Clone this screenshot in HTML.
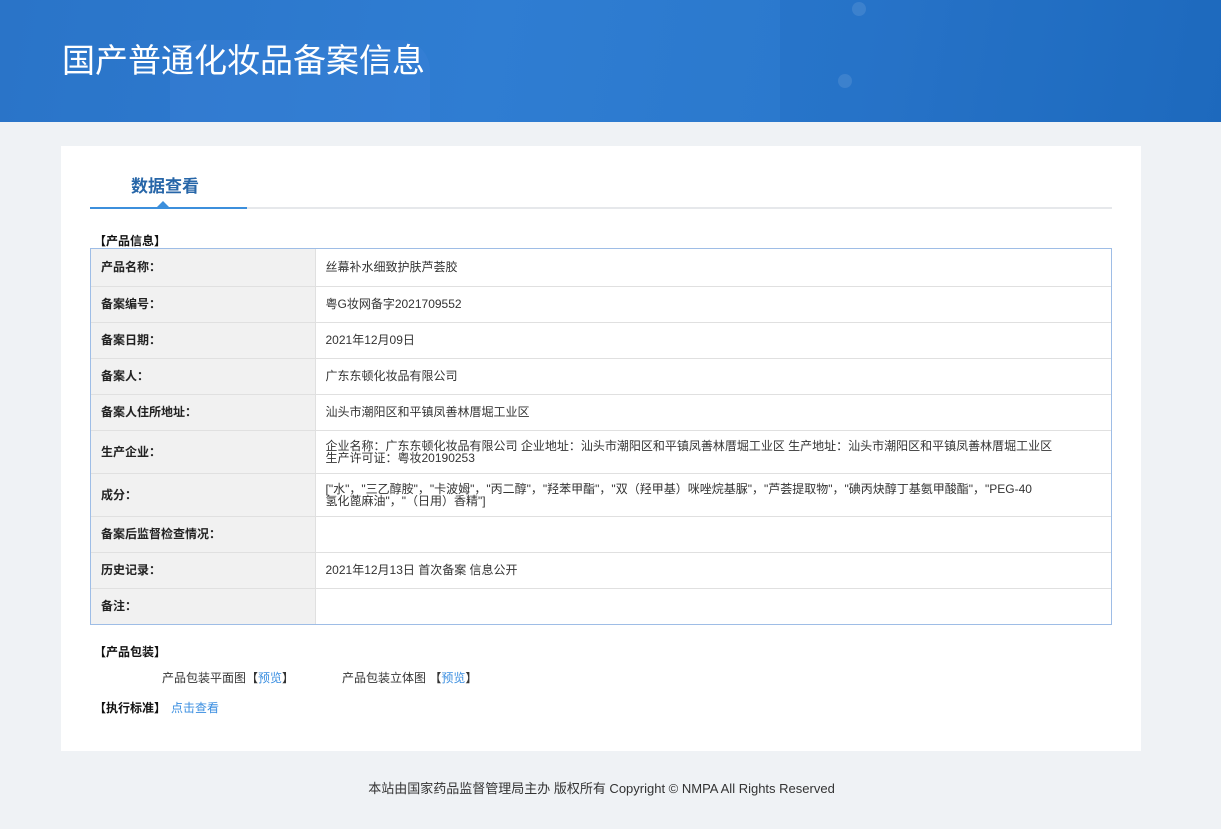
<!DOCTYPE html>
<html><head><meta charset="utf-8"><style>
*{margin:0;padding:0;box-sizing:border-box}
body{width:1221px;height:829px;background:#eff2f5;font-family:"Liberation Sans","Noto Sans CJK SC",sans-serif;font-size:12px;color:#333;position:relative;overflow:hidden}
.hd{position:absolute;left:0;top:0;width:1221px;height:122px;background:linear-gradient(100deg,#2a74c8 0%,#2f7dd2 40%,#2a78cc 70%,#1f6dc0 100%);overflow:hidden}
.hd h1{position:absolute;left:62px;top:34px;color:#fff;font-weight:normal;font-size:33px;letter-spacing:0px}
.card{position:absolute;left:61px;top:146px;width:1080px;height:605px;background:#fff}
.tab{position:absolute;left:70px;top:26px;font-size:17px;font-weight:bold;color:#2766a8}
.line{position:absolute;left:29px;top:61px;width:1022px;height:2px;background:#e6e8eb}
.line2{position:absolute;left:29px;top:61px;width:157px;height:2px;background:#3c8fdc}
.tri{position:absolute;left:96px;top:55px;width:0;height:0;border-left:6px solid transparent;border-right:6px solid transparent;border-bottom:6px solid #3c8fdc}
.sec{position:absolute;font-weight:bold;font-size:12px;color:#111}
.tw{position:absolute;left:29px;top:102px;width:1022px;border:1px solid #9ebde6}
table{width:100%;border-collapse:collapse;border-style:hidden}
td{border:1px solid #e0e0e0;font-size:12px;vertical-align:middle;line-height:12px}
td.l{width:224px;background:#f1f1f1;font-weight:bold;padding-left:10px;color:#222}
td.v{padding-left:10px;color:#333}
a{color:#3a8ee0;text-decoration:none}
.ft{position:absolute;top:779px;left:0;width:1203px;text-align:center;font-size:13px;color:#333}
</style></head><body>
<div class="hd">
<div style="position:absolute;left:170px;top:40px;width:260px;height:120px;background:rgba(80,140,230,.18);border-radius:30px"></div>
<div style="position:absolute;left:780px;top:0;width:441px;height:122px;background:rgba(20,80,170,.12)"></div>
<div style="position:absolute;left:852px;top:2px;width:14px;height:14px;border-radius:50%;background:rgba(255,255,255,.1)"></div>
<div style="position:absolute;left:838px;top:74px;width:14px;height:14px;border-radius:50%;background:rgba(255,255,255,.1)"></div>
<h1>国产普通化妆品备案信息</h1></div>
<div class="card">
<div class="tab">数据查看</div>
<div class="line"></div><div class="line2"></div><div class="tri"></div>
<div class="sec" style="left:33px;top:86px">【产品信息】</div>
<div class="tw"><table>
<tr style="height:37px"><td class="l">产品名称：</td><td class="v">丝幕补水细致护肤芦荟胶</td></tr>
<tr style="height:36px"><td class="l">备案编号：</td><td class="v">粤G妆网备字2021709552</td></tr>
<tr style="height:36px"><td class="l">备案日期：</td><td class="v">2021年12月09日</td></tr>
<tr style="height:36px"><td class="l">备案人：</td><td class="v">广东东顿化妆品有限公司</td></tr>
<tr style="height:36px"><td class="l">备案人住所地址：</td><td class="v">汕头市潮阳区和平镇凤善林厝堀工业区</td></tr>
<tr style="height:43px"><td class="l">生产企业：</td><td class="v">企业名称：广东东顿化妆品有限公司 企业地址：汕头市潮阳区和平镇凤善林厝堀工业区 生产地址：汕头市潮阳区和平镇凤善林厝堀工业区<br>生产许可证：粤妆20190253</td></tr>
<tr style="height:43px"><td class="l">成分：</td><td class="v">["水"，"三乙醇胺"，"卡波姆"，"丙二醇"，"羟苯甲酯"，"双（羟甲基）咪唑烷基脲"，"芦荟提取物"，"碘丙炔醇丁基氨甲酸酯"，"PEG-40<br>氢化蓖麻油"，"（日用）香精"]</td></tr>
<tr style="height:36px"><td class="l">备案后监督检查情况：</td><td class="v"></td></tr>
<tr style="height:36px"><td class="l">历史记录：</td><td class="v">2021年12月13日 首次备案 信息公开</td></tr>
<tr style="height:36px"><td class="l">备注：</td><td class="v"></td></tr>
</table></div>
<div class="sec" style="left:33px;top:497px">【产品包装】</div>
<div style="position:absolute;left:101px;top:523px">产品包装平面图【<a>预览</a>】</div>
<div style="position:absolute;left:281px;top:523px">产品包装立体图 【<a>预览</a>】</div>
<div class="sec" style="left:33px;top:553px">【执行标准】</div>
<div style="position:absolute;left:110px;top:553px"><a>点击查看</a></div>
</div>
<div class="ft" style="top:778px">本站由国家药品监督管理局主办 版权所有 Copyright © NMPA All Rights Reserved</div>
</body></html>
